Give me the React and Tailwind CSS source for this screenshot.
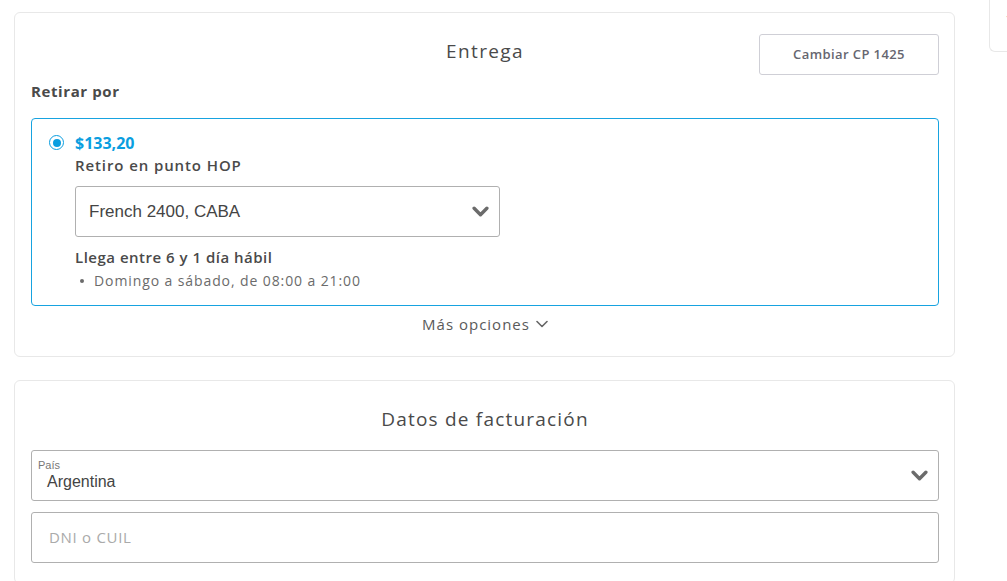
import React from "react";

const font = { fontFamily: "'Open Sans', 'Noto Sans', sans-serif" };
const arial = { fontFamily: "'Liberation Sans', Arial, sans-serif" };

function Chevron({ className = "" }) {
  return (
    <svg viewBox="0 0 16 10" className={className} fill="none">
      <polyline points="2,2 8,8 14,2" stroke="currentColor" strokeWidth="3.2" strokeLinecap="round" strokeLinejoin="round" />
    </svg>
  );
}

function ThinChevron() {
  return (
    <svg viewBox="0 0 12 8" className="w-[12px] h-[8px] ml-[6px] text-[#666]" fill="none">
      <polyline points="1,1.5 6,6.5 11,1.5" stroke="currentColor" strokeWidth="1.6" strokeLinecap="round" strokeLinejoin="round" />
    </svg>
  );
}

function App() {
  return (
    <div className="min-h-screen bg-white text-[#4a4a4a] flex" style={font}>
      {/* main column */}
      <div className="ml-[14px] w-[941px] shrink-0 pt-[12px] flex flex-col gap-[23px]">
        {/* Entrega */}
        <section className="border border-[#e8e8e8] rounded-[6px] pl-[16px] pr-[15px] pt-[21px] pb-[22px]">
          <div className="grid grid-cols-[1fr_auto_1fr] items-start">
            <div />
            <h2 className="mt-[3px] text-[19px] leading-[28px] tracking-[1.4px] text-[#4a4a4a]">Entrega</h2>
            <button className="justify-self-end w-[180px] h-[41px] border border-[#cfcfd6] rounded-[3px] text-[13px] tracking-[0.4px] font-semibold text-[#666670]">
              Cambiar CP 1425
            </button>
          </div>
          <p className="mt-[6px] text-[15px] leading-[20px] tracking-[0.6px] font-bold text-[#4a4a4a]">Retirar por</p>

          <div className="mt-[17px] border border-[#17a3e0] rounded-[4px] pl-[17px] pr-4 pt-[13px] pb-[14px] flex gap-[11px]">
            <div className="pt-[3px]">
              <div className="w-[15px] h-[15px] rounded-full border-[1.5px] border-[#0a9ee0] flex items-center justify-center">
                <div className="w-[8px] h-[8px] rounded-full bg-[#0a9ee0]" />
              </div>
            </div>
            <div className="flex flex-col">
              <p className="text-[16px] leading-[22px] font-bold text-[#0a9ee0]">$133,20</p>
              <p className="text-[15px] leading-[22px] tracking-[0.9px] font-semibold text-[#4a4a4a]">Retiro en punto HOP</p>
              <div className="mt-[10px] w-[425px] h-[51px] border border-[#b0b0b0] rounded-[3px] flex items-center justify-between pl-[13px] pr-[10px]">
                <span className="text-[17px] text-[#444]" style={arial}>
                  French 2400, CABA
                </span>
                <Chevron className="w-[17px] h-[11px] text-[#6b6b6b]" />
              </div>
              <p className="mt-[10px] text-[15px] leading-[20px] tracking-[0.5px] font-semibold text-[#4a4a4a]">Llega entre 6 y 1 día hábil</p>
              <ul className="mt-[4px] pl-[5px] list-none">
                <li className="flex items-center text-[14px] leading-[20px] tracking-[0.9px] text-[#6b6b6b]">
                  <span className="w-[4px] h-[4px] rounded-full bg-[#6b6b6b] mr-[10px]" />
                  Domingo a sábado, de 08:00 a 21:00
                </li>
              </ul>
            </div>
          </div>

          <div className="mt-[8px] flex items-center justify-center text-[15px] leading-[20px] tracking-[1px] text-[#5a5a5a]">
            Más opciones
            <ThinChevron />
          </div>
        </section>

        {/* Datos de facturación */}
        <section className="border border-[#e8e8e8] rounded-[6px] pl-[16px] pr-[15px] pt-[24px] pb-[20px]">
          <h2 className="text-center text-[19px] leading-[28px] tracking-[1.2px] text-[#4a4a4a]">Datos de facturación</h2>
          <div className="mt-[17px] h-[51px] border border-[#b0b0b0] rounded-[3px] flex items-center justify-between pl-[6px] pr-[10px]">
            <div className="flex flex-col" style={arial}>
              <span className="text-[11px] leading-[13px] text-[#777]">País</span>
              <span className="pl-[9px] text-[16px] leading-[20px] text-[#444]">Argentina</span>
            </div>
            <Chevron className="w-[17px] h-[11px] text-[#6b6b6b]" />
          </div>
          <div className="mt-[11px] h-[51px] border border-[#b0b0b0] rounded-[3px] flex items-center pl-[17px]">
            <span className="text-[15px] tracking-[0.7px] text-[#aaaaaa]">DNI o CUIL</span>
          </div>
        </section>
      </div>

      {/* side panel edge */}
      <div className="ml-[34px] flex-1 min-w-0">
        <div className="h-[52px] border-l border-b border-[#e8e8e8] rounded-bl-[6px] pl-[16px] pt-[2px]">
          <span className="text-[9px] text-[#999]">·</span>
        </div>
      </div>
    </div>
  );
}

export default App;
